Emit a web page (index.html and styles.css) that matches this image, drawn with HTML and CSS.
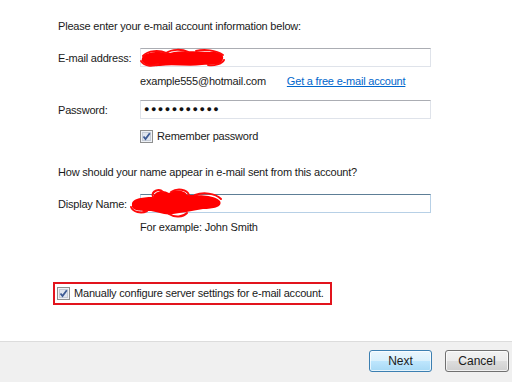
FILE: index.html
```html
<!DOCTYPE html>
<html lang="en">
<head>
  <meta charset="UTF-8">
  <title>Add E-mail Account</title>
  <link rel="stylesheet" href="styles.css">
</head>
<body>
  <div class="page">
    <div class="content">
      <p class="intro">Please enter your e-mail account information below:</p>

      <div class="field-row row-email">
        <label class="field-label">E-mail address:</label>
        <div class="textbox">
          <svg class="scribble scribble-email" width="90" height="22" viewBox="0 0 90 22">
            <path d="M4 11 C6 5 20 4 32 6 C44 3 60 5 72 5 C82 4 88 9 84 14 C82 19 72 17 64 18 C50 20 36 17 22 19 C10 20 2 16 4 11 Z" fill="#ff0000"/>
            <path d="M5 9 C10 3 22 3 28 6 C34 2 44 2 50 5 M58 4 C66 2 78 3 85 8 M3 14 C6 19 14 20 20 17 M70 18 C76 19 84 17 86 13" fill="none" stroke="#ff0a0a" stroke-width="2" stroke-linecap="round"/>
          </svg>
        </div>
      </div>
      <p class="hint hint-email">example555@hotmail.com <a class="free-link" href="#">Get a free e-mail account</a></p>

      <div class="field-row row-password">
        <label class="field-label">Password:</label>
        <div class="textbox password">●●●●●●●●●●●</div>
      </div>
      <div class="check-line remember">
        <span class="checkbox"><svg width="13" height="13" viewBox="0 0 13 13"><rect x="0.5" y="0.5" width="12" height="12" fill="#eef1f6" stroke="#8e8f8f"/><rect x="2.5" y="2.5" width="8" height="8" fill="#dfe5ee" stroke="#c4cbd6" stroke-width="1"/><path d="M3.5 6.5 L5.5 9 L9.8 3.2" fill="none" stroke="#3c5a94" stroke-width="1.8"/></svg></span>
        <span>Remember password</span>
      </div>

      <p class="question">How should your name appear in e-mail sent from this account?</p>

      <div class="field-row row-display">
        <label class="field-label">Display Name:</label>
        <div class="textbox focused">
          <svg class="scribble scribble-name" width="96" height="32" viewBox="0 0 96 32">
            <path d="M3 18 C2 12 12 10 24 10 C26 4 34 2 40 6 C46 2 56 3 58 8 C70 8 86 8 91 14 C94 20 84 22 74 22 C62 24 52 26 44 27 C36 29 30 25 22 24 C12 24 2 24 3 18 Z" fill="#ff0000"/>
            <path d="M24 10 C22 4 30 1 34 5 M42 5 C48 1 58 2 60 8 M66 8 C74 5 86 6 92 12 M2 20 C4 25 12 27 18 24 M40 27 C46 31 54 30 58 26" fill="none" stroke="#ff0a0a" stroke-width="2" stroke-linecap="round"/>
          </svg>
        </div>
      </div>
      <p class="hint hint-name">For example: John Smith</p>

      <div class="manual-box">
        <span class="checkbox"><svg width="13" height="13" viewBox="0 0 13 13"><rect x="0.5" y="0.5" width="12" height="12" fill="#eef1f6" stroke="#8e8f8f"/><rect x="2.5" y="2.5" width="8" height="8" fill="#dfe5ee" stroke="#c4cbd6" stroke-width="1"/><path d="M3.5 6.5 L5.5 9 L9.8 3.2" fill="none" stroke="#3c5a94" stroke-width="1.8"/></svg></span>
        <span>Manually configure server settings for e-mail account.</span>
      </div>
    </div>

    <div class="footer">
      <button class="btn btn-default">Next</button>
      <button class="btn">Cancel</button>
    </div>
  </div>
</body>
</html>
```

FILE: styles.css
```css
body {
    margin: 0;
    background-color: #ffffff;
    font-family: 'Liberation Sans', Arial, sans-serif;
    font-size: 11px;
    line-height: 15px;
    letter-spacing: -0.2px;
    color: #1a1a1a;
}
.page {
    width: 517px;
    height: 382px;
    display: flex;
    flex-direction: column;
}
.content {
    flex: 1;
    padding-left: 58px;
    padding-top: 19px;
}
.intro {
    margin: 0;
}
.field-row {
    display: grid;
    grid-template-columns: 82px 291px;
    align-items: center;
}
.field-label {
    white-space: nowrap;
    padding-top: 1px;
}
.row-email {
    margin-top: 14px;
}
.row-password {
    margin-top: 11px;
}
.row-display {
    margin-top: 14px;
}
.textbox {
    position: relative;
    box-sizing: border-box;
    height: 19px;
    border: 1px solid #dfe3ea;
    border-top-color: #abadb3;
    background-color: #ffffff;
}
.textbox.focused {
    border-color: #b7d0e6;
    border-top-color: #5d7e96;
}
.textbox.password {
    padding-left: 3px;
    font-size: 9px;
    line-height: 17px;
    letter-spacing: 1.5px;
    color: #111;
}
.scribble {
    position: absolute;
}
.scribble-email {
    left: -3px;
    top: -2px;
}
.scribble-name {
    left: -12px;
    top: -8px;
}
.hint {
    margin: 0;
    padding-left: 82px;
}
.hint-email {
    margin-top: 7px;
}
.hint-name {
    margin-top: 7px;
}
.free-link {
    margin-left: 18px;
    color: #0066cc;
    text-decoration: underline;
}
.check-line {
    display: flex;
    align-items: center;
    gap: 4px;
    padding-left: 82px;
}
.checkbox {
    display: inline-flex;
    width: 13px;
    height: 13px;
}
.remember {
    margin-top: 10px;
}
.question {
    margin: 21px 0 0 0;
}
.manual-box {
    display: inline-flex;
    align-items: center;
    gap: 4px;
    box-sizing: border-box;
    height: 23px;
    margin-top: 47px;
    margin-left: -5px;
    padding: 0 6px 0 2px;
    border: 2px solid #e2141d;
}
.footer {
    display: flex;
    justify-content: flex-end;
    gap: 13px;
    box-sizing: border-box;
    width: 512px;
    height: 41px;
    padding: 8px 3px 0 0;
    background-color: #f0f0f0;
    border-top: 1px solid #dcdcdc;
}
.btn {
    box-sizing: border-box;
    width: 64px;
    height: 22px;
    padding: 0;
    font-family: 'Liberation Sans', Arial, sans-serif;
    font-size: 12px;
    color: #1a1a1a;
    border: 1px solid #707070;
    border-radius: 3px;
    background: linear-gradient(#f2f2f2 0%, #ebebeb 50%, #dddddd 51%, #cfcfcf 100%);
    box-shadow: inset 0 0 0 1px rgba(255, 255, 255, 0.7);
}
.btn-default {
    width: 63px;
    border-color: #3c7fb1;
    background: linear-gradient(#eaf6fd 0%, #d9f0fc 50%, #bee6fd 51%, #a7d9f5 100%);
}
```
